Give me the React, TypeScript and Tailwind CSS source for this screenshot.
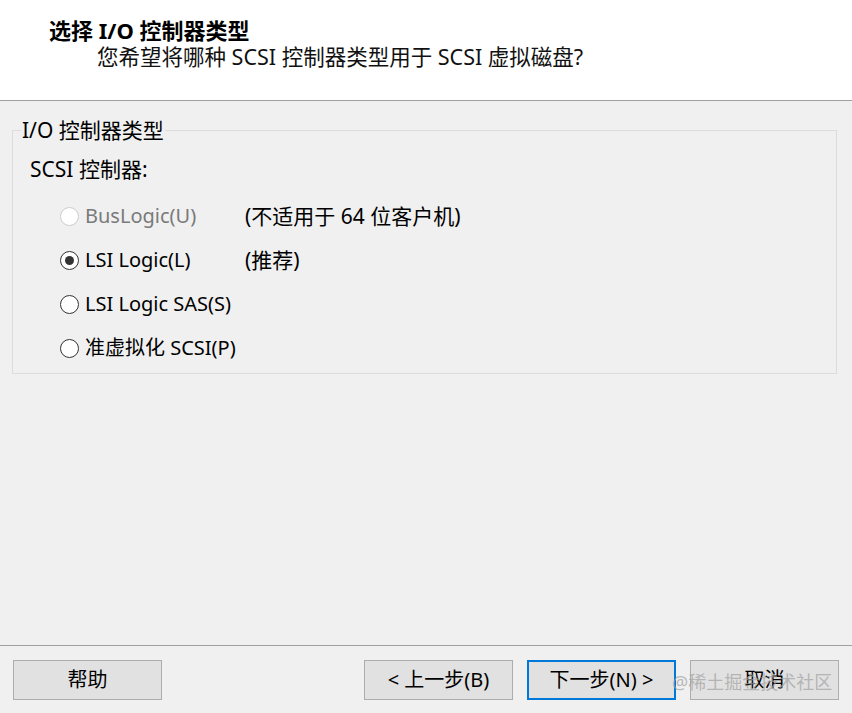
import React, { useState } from "react";

const FONT = { fontFamily: '"Noto Sans", "Noto Sans CJK SC", sans-serif' };

interface Option {
  id: string;
  label: string;
  note?: string;
  disabled?: boolean;
}

const options: Option[] = [
  { id: "buslogic", label: "BusLogic(U)", note: "(不适用于 64 位客户机)", disabled: true },
  { id: "lsi", label: "LSI Logic(L)", note: "(推荐)" },
  { id: "lsisas", label: "LSI Logic SAS(S)" },
  { id: "pvscsi", label: "准虚拟化 SCSI(P)" },
];

function Radio({ checked, disabled }: { checked: boolean; disabled?: boolean }) {
  return (
    <span
      className={
        "flex h-[19px] w-[19px] shrink-0 items-center justify-center rounded-full border bg-white " +
        (disabled ? "border-[#cccccc]" : "border-[#333333]")
      }
    >
      {checked && <span className="h-[9px] w-[9px] rounded-full bg-[#333333]" />}
    </span>
  );
}

export default function App() {
  const [selected, setSelected] = useState("lsi");

  return (
    <div
      className="flex h-[713px] w-[852px] flex-col overflow-hidden bg-[#f0f0f0] text-black"
      style={FONT}
    >
      {/* header */}
      <div className="h-[101px] shrink-0 border-b border-[#a0a0a0] bg-white pl-[49px] pt-[17px]">
        <h1 className="text-[22px] font-bold leading-[26px]">选择 I/O 控制器类型</h1>
        <p className="mt-[1px] pl-[48px] text-[21.5px] leading-[26px] text-[#111]">
          您希望将哪种 SCSI 控制器类型用于 SCSI 虚拟磁盘?
        </p>
      </div>

      {/* body */}
      <div className="flex-1 px-[12px] pt-[17px]">
        <fieldset className="m-0 h-[256px] w-[825px] border border-[#dcdcdc] px-[17px] pb-0 pt-0">
          <legend className="ml-[-9px] px-[1px] text-[21px] leading-[24px]">I/O 控制器类型</legend>
          <div className="pt-[14px] text-[21px] leading-[26px]">SCSI 控制器:</div>
          <div className="mt-[12px] flex flex-col">
            {options.map((o) => (
              <label
                key={o.id}
                className="flex h-[44px] cursor-default items-center pl-[30px]"
                onClick={() => !o.disabled && setSelected(o.id)}
              >
                <Radio checked={selected === o.id} disabled={o.disabled} />
                <span
                  className={
                    "ml-[6px] w-[160px] text-[20px] leading-[26px] " +
                    (o.disabled ? "text-[#7a7a7a]" : "text-black")
                  }
                >
                  {o.label}
                </span>
                {o.note && <span className="text-[21px] leading-[26px]">{o.note}</span>}
              </label>
            ))}
          </div>
        </fieldset>
      </div>

      {/* footer */}
      <div className="relative h-[68px] shrink-0 border-t border-[#a0a0a0] px-[13px] pt-[14px]">
        <div className="flex items-center">
          <button className="h-[40px] w-[149px] border border-[#adadad] bg-[#e1e1e1] text-[20px]">
            帮助
          </button>
          <div className="ml-auto flex gap-[14px]">
            <button className="h-[40px] w-[149px] border border-[#adadad] bg-[#e1e1e1] text-[20px]">
              &lt; 上一步(B)
            </button>
            <button className="h-[40px] w-[149px] border-2 border-[#0078d7] bg-[#e1e1e1] text-[20px]">
              下一步(N) &gt;
            </button>
            <button className="h-[40px] w-[149px] border border-[#adadad] bg-[#e1e1e1] text-[20px]">
              取消
            </button>
          </div>
        </div>
        <span className="pointer-events-none absolute left-[672px] top-[23px] text-[18px] text-[#a0a0a0]/70">
          @稀土掘金技术社区
        </span>
      </div>
    </div>
  );
}
